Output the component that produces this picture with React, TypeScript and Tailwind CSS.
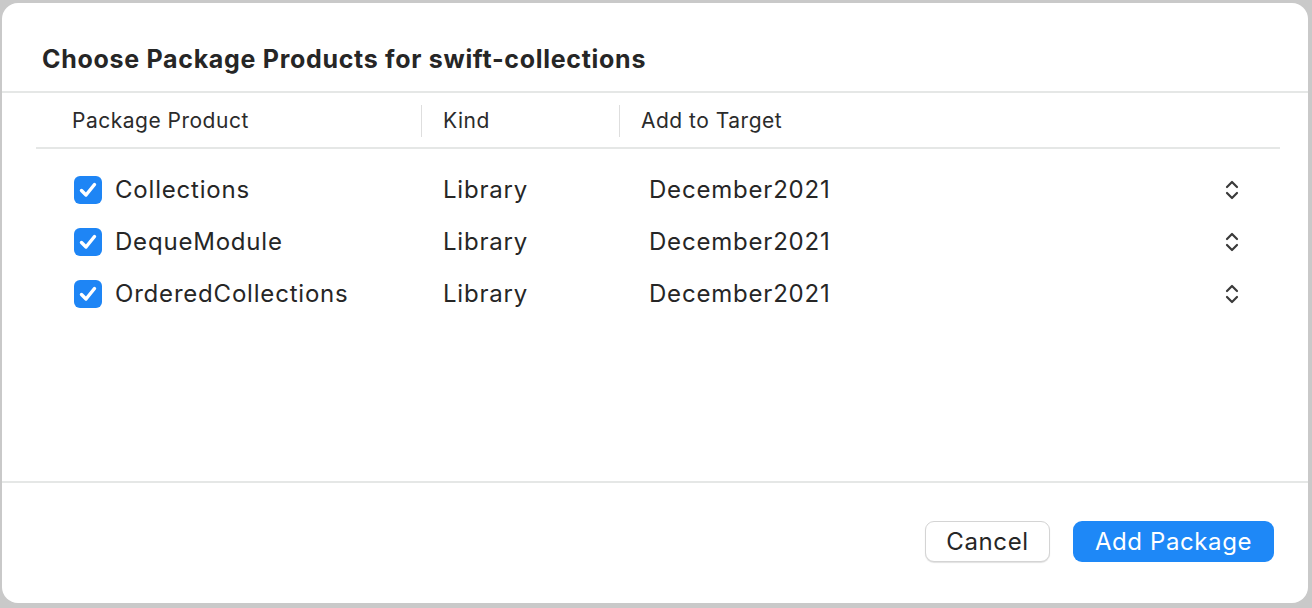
import React from "react";

const rows = [
  { name: "Collections", kind: "Library", target: "December2021" },
  { name: "DequeModule", kind: "Library", target: "December2021" },
  { name: "OrderedCollections", kind: "Library", target: "December2021" },
];

function CheckBox() {
  return (
    <div className="w-[28px] h-[28px] rounded-[6px] bg-[#1e85f5] flex items-center justify-center shrink-0">
      <svg width="20" height="20" viewBox="0 0 20 20" fill="none">
        <path
          d="M3.5 10.5 L8 15 L16.5 4.5"
          stroke="white"
          strokeWidth="3.4"
          strokeLinecap="round"
          strokeLinejoin="round"
        />
      </svg>
    </div>
  );
}

function UpDown() {
  return (
    <svg width="16" height="24" viewBox="0 0 16 24" fill="none">
      <path
        d="M3 9 L8 4 L13 9"
        stroke="#3a3a3a"
        strokeWidth="2.2"
        strokeLinecap="round"
        strokeLinejoin="round"
      />
      <path
        d="M3 15 L8 20 L13 15"
        stroke="#3a3a3a"
        strokeWidth="2.2"
        strokeLinecap="round"
        strokeLinejoin="round"
      />
    </svg>
  );
}

export default function App() {
  return (
    <div
      className="w-[1312px] h-[608px] bg-[#c9c9c9] pt-[3px] pl-[2px] pr-[4px] pb-[5px]"
      style={{ fontFamily: "Inter, 'Liberation Sans', sans-serif" }}
    >
      <div className="h-full bg-white rounded-[16px] flex flex-col text-[#262626]">
        {/* title */}
        <div className="h-[88px] pt-[41px] px-[40px]">
          <h1 className="text-[25px] leading-[30px] font-bold tracking-[0.7px]">
            Choose Package Products for swift-collections
          </h1>
        </div>
        <div className="h-[2px] bg-[#e5e7e6]" />

        {/* table */}
        <div className="ml-[34px] mr-[28px]">
          <div className="h-[54px] pt-[2px] flex items-center text-[21px] tracking-[0.5px] text-[#2b2b2b]">
            <div className="w-[385px] pl-[36px]">Package Product</div>
            <div className="w-px h-[32px] bg-[#dedede]" />
            <div className="w-[197px] pl-[21px]">Kind</div>
            <div className="w-px h-[32px] bg-[#dedede]" />
            <div className="flex-1 pl-[21px]">Add to Target</div>
          </div>
          <div className="h-[2px] bg-[#e5e7e6]" />

          <div className="pt-[15px]">
            {rows.map((r) => (
              <div
                key={r.name}
                className="h-[52px] flex items-center text-[24px] tracking-[0.8px]"
              >
                <div className="w-[385px] pl-[38px] flex items-center gap-[13px]">
                  <CheckBox />
                  <span>{r.name}</span>
                </div>
                <div className="w-[198px] pl-[22px]">{r.kind}</div>
                <div className="flex-1 pl-[30px] pr-[40px] flex items-center justify-between">
                  <span>{r.target}</span>
                  <UpDown />
                </div>
              </div>
            ))}
          </div>
        </div>

        <div className="flex-1" />
        <div className="h-[2px] bg-[#e5e7e6]" />

        {/* footer */}
        <div className="h-[120px] flex items-start justify-end gap-[23px] pt-[38px] pr-[34px]">
          <button className="w-[125px] h-[41px] rounded-[9px] bg-white border border-[#d4d4d4] shadow-[0_1px_1px_rgba(0,0,0,0.12)] text-[24px] tracking-[0.6px] text-[#262626]">
            Cancel
          </button>
          <button className="w-[201px] h-[41px] rounded-[9px] bg-[#1e88f7] text-[24px] tracking-[0.6px] text-white">
            Add Package
          </button>
        </div>
      </div>
    </div>
  );
}
